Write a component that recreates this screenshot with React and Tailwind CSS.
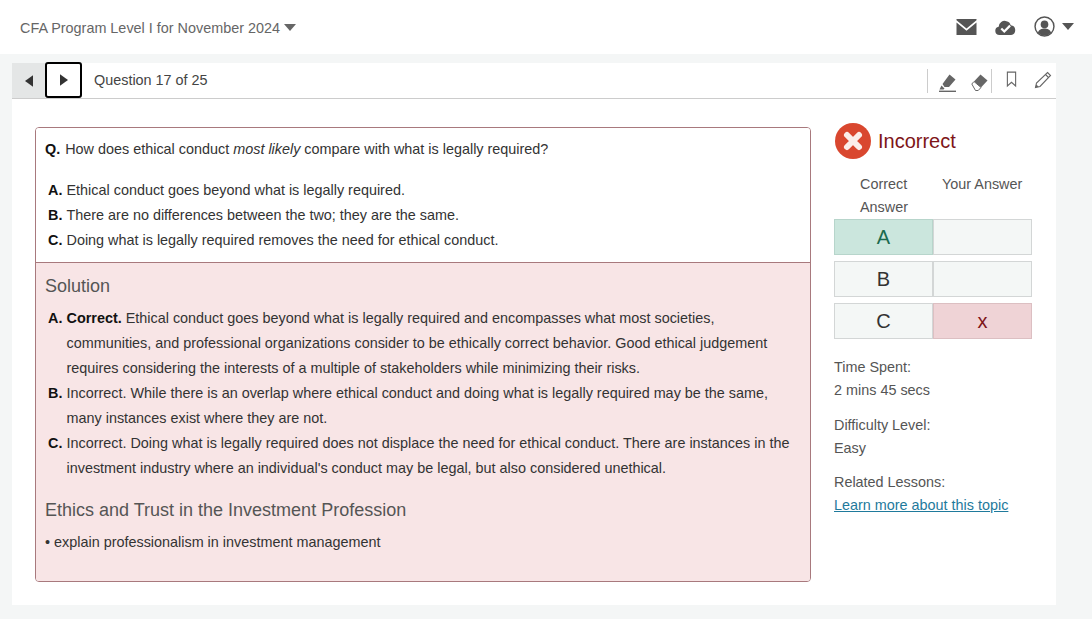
const Caret = ({ className }) => (
  <svg viewBox="0 0 12 7" className={className}><path d="M0 0h12L6 7z" fill="currentColor" /></svg>
);

function Answer({ letter, children, bold }) {
  return (
    <div className="flex">
      <b className="w-[18.5px] shrink-0 text-[#111]">{letter}</b>
      <div>{bold && <b className="text-[#111]">{bold} </b>}{children}</div>
    </div>
  );
}

function Cell({ children, className }) {
  return <div className={"flex-1 h-[36px] flex items-center justify-center text-[20px] border " + className}>{children}</div>;
}

export default function App() {
  return (
    <div className="w-[1092px] h-[619px] overflow-hidden bg-[#f4f6f6] text-[14.4px] text-[#333] font-['Liberation_Sans',Arial,sans-serif]">
      <header className="h-[54px] bg-white flex items-center pl-[20px] pr-[18px]">
        <span className="text-[#666] mt-[4px]">CFA Program Level I for November 2024</span>
        <Caret className="w-[12px] h-[7px] ml-[4px] text-[#666]" />
        <div className="ml-auto flex items-center text-[#555]">
          <svg viewBox="0 0 20 16" className="w-[21px] h-[16px] mt-[-1px]"><path fill="currentColor" d="M0 0h20v1.2L10 9.5 0 1.2zM0 3.4V16h20V3.4L10 11.8z" /></svg>
          <svg viewBox="0 0 22 16" className="w-[21px] h-[15px] ml-[18px]">
            <path fill="currentColor" d="M4.5 16a4.5 4.5 0 0 1-.8-8.9A6.5 6.5 0 0 1 12 1.2a5.5 5.5 0 0 1 4.5 4.3A5.3 5.3 0 0 1 17 16z" />
            <path fill="none" stroke="#fff" strokeWidth="2.4" d="M6.5 9l3.2 3.2 6.2-6.2" />
          </svg>
          <svg viewBox="0 0 22 22" className="w-[21px] h-[21px] ml-[18px] -mt-[2px]">
            <circle cx="11" cy="11" r="9.9" fill="none" stroke="currentColor" strokeWidth="1.5" />
            <circle cx="11" cy="8.8" r="4" fill="currentColor" />
            <path fill="currentColor" d="M4 17.5c1-3.5 4-4.5 7-4.5s6 1 7 4.5A9.5 9.5 0 0 1 11 20.5 9.5 9.5 0 0 1 4 17.5z" />
          </svg>
          <Caret className="w-[12px] h-[7px] ml-[7px] -mt-[1px]" />
        </div>
      </header>

      <main className="ml-[12px] mt-[9px] w-[1044px] h-[542px] bg-white">
        <div className="h-[36px] flex items-stretch border-b border-[#ccc]">
          <div className="w-[33px] h-[35px] bg-[#e4e6e6] flex items-center justify-center">
            <svg viewBox="0 0 7 10" className="w-[8px] h-[12px] text-[#333]"><path fill="currentColor" d="M7 0v10L0 5z" /></svg>
          </div>
          <div className="w-[37px] h-[36px] -mt-[1px] bg-white border-2 border-black rounded-[3px] flex items-center justify-center">
            <svg viewBox="0 0 7 10" className="w-[8px] h-[12px] text-[#333]"><path fill="currentColor" d="M0 0v10l7-5z" /></svg>
          </div>
          <span className="ml-[12px] self-center text-[#444] mt-[1px]">Question 17 of 25</span>
          <div className="ml-auto flex items-center pr-[4px] text-[#666]">
            <div className="w-px h-[24px] bg-[#ccc] mr-[11px]" />
            <svg viewBox="0 0 17 18" className="w-[17px] h-[18px] mt-[4px]">
              <path fill="currentColor" d="M10.5 0.5l6 5-6.5 7.5H5.5L3.5 10zM2.5 11.5l3 3-1 1H0.5z" />
              <rect x="0" y="16.6" width="17" height="1.4" fill="currentColor" />
            </svg>
            <svg viewBox="0 0 17 17" className="w-[17px] h-[17px] ml-[15px] mt-[4px]">
              <path fill="currentColor" d="M9.5 0.5l7 6-6.5 7-7-6z" />
              <path fill="#fff" stroke="currentColor" strokeWidth="1" d="M3 7.5l7 6-2.8 3H4.5L0.8 10z" />
            </svg>
            <div className="w-px h-[24px] bg-[#ccc] ml-[3px] mr-[14px]" />
            <svg viewBox="0 0 12 18" className="w-[11px] h-[17px] -mt-[2px]"><path fill="none" stroke="currentColor" strokeWidth="1.2" d="M1.5 1h9v15l-4.5-4-4.5 4z" /></svg>
            <svg viewBox="0 0 18 18" className="w-[18px] h-[18px] ml-[17px] -mt-[2px]">
              <path fill="none" stroke="currentColor" strokeWidth="1.1" d="M13.5 1.5l3 3L6 15.5 1.5 16.5 2.5 12z" />
              <path stroke="currentColor" strokeWidth="1.1" d="M11.5 3.5l3 3" />
              <path fill="currentColor" d="M1.5 16.5l.7-3.2 2.5 2.5z" />
            </svg>
          </div>
        </div>

        <div className="flex pl-[23px] pt-[28px]">
          <section className="w-[776px] h-[455px] border border-[#a8797d] rounded-[4px] overflow-hidden flex flex-col">
            <div className="h-[135px] shrink-0 bg-white pl-[9px] pt-[11px] border-b border-[#a8797d]">
              <p className="leading-[20px]"><b className="text-[#111] mr-[1px]">Q.</b> How does ethical conduct <i>most likely</i> compare with what is legally required?</p>
              <div className="mt-[19px] ml-[3px] leading-[25px]">
                <Answer letter="A.">Ethical conduct goes beyond what is legally required.</Answer>
                <Answer letter="B.">There are no differences between the two; they are the same.</Answer>
                <Answer letter="C.">Doing what is legally required removes the need for ethical conduct.</Answer>
              </div>
            </div>
            <div className="flex-1 bg-[#f8e5e6] pl-[9px] pr-[12px]">
              <h2 className="text-[18px] leading-[20px] text-[#555] mt-[13px]">Solution</h2>
              <div className="mt-[10px] ml-[3px] leading-[25px]">
                <Answer letter="A." bold="Correct.">Ethical conduct goes beyond what is legally required and encompasses what most societies, communities, and professional organizations consider to be ethically correct behavior. Good ethical judgement requires considering the interests of a multiple of stakeholders while minimizing their risks.</Answer>
                <Answer letter="B.">Incorrect. While there is an overlap where ethical conduct and doing what is legally required may be the same, many instances exist where they are not.</Answer>
                <Answer letter="C.">Incorrect. Doing what is legally required does not displace the need for ethical conduct. There are instances in the investment industry where an individual's conduct may be legal, but also considered unethical.</Answer>
              </div>
              <h2 className="text-[18px] leading-[20px] text-[#555] mt-[19px]">Ethics and Trust in the Investment Profession</h2>
              <p className="mt-[12px] leading-[20px]">• explain professionalism in investment management</p>
            </div>
          </section>

          <aside className="ml-[23px] w-[198px]">
            <div className="flex items-center h-[36px] -mt-[4px] pl-[1px]">
              <svg viewBox="0 0 36 36" className="w-[36px] h-[36px]">
                <circle cx="18" cy="18" r="18" fill="#d9472f" />
                <path stroke="#fbeeea" strokeWidth="6" strokeLinecap="round" d="M12 12l12 12M24 12L12 24" />
              </svg>
              <span className="ml-[7px] text-[20px] text-[#7e1518]">Incorrect</span>
            </div>
            <div className="flex mt-[14px] leading-[23px] text-[#555]">
              <div className="w-[99px] pl-[26px]">Correct Answer</div>
              <div className="pl-[9px]">Your Answer</div>
            </div>
            <div className="flex flex-col gap-[6px]">
              <div className="flex">
                <Cell className="bg-[#cbe6dd] border-[#b7d5cb] text-[#1b6b4f]">A</Cell>
                <Cell className="bg-[#f4f7f6] border-[#d3d6d6]"></Cell>
              </div>
              <div className="flex">
                <Cell className="bg-[#f4f7f6] border-[#d3d6d6]">B</Cell>
                <Cell className="bg-[#f4f7f6] border-[#d3d6d6]"></Cell>
              </div>
              <div className="flex">
                <Cell className="bg-[#f4f7f6] border-[#d3d6d6]">C</Cell>
                <Cell className="bg-[#efd3d6] border-[#dcbfc2] text-[#7e1518] text-[18px]">x</Cell>
              </div>
            </div>
            <div className="mt-[17px] leading-[23px] text-[#555]">
              <div>Time Spent:</div>
              <div>2 mins 45 secs</div>
              <div className="mt-[12px]">Difficulty Level:</div>
              <div>Easy</div>
              <div className="mt-[11px]">Related Lessons:</div>
              <a href="#" className="text-[#1f7a9c] underline">Learn more about this topic</a>
            </div>
          </aside>
        </div>
      </main>
    </div>
  );
}
